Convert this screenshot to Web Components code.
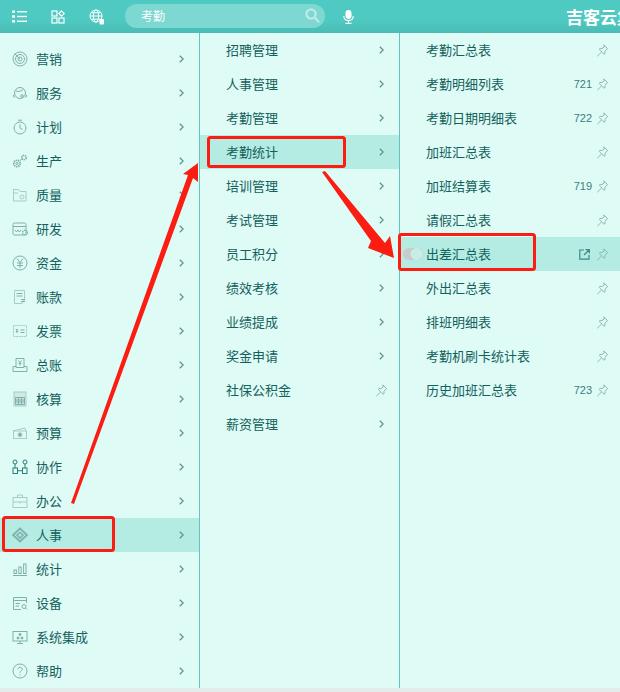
<!DOCTYPE HTML><html lang="zh-CN">
<head><meta charset="utf-8">
<title>吉客云 菜单</title>
<style>
  html, body { margin: 0; height: 100%; overflow: hidden; background: #dffbf6; }
  body { font-family: "Noto Sans CJK SC", "Liberation Sans", sans-serif; }
</style>

<template id="tpl-screen">
  <style>
    :host { display: flex; flex-direction: column; width: 620px; height: 692px; position: relative; overflow: hidden; background: #dffbf6; }
    .cols { display: flex; height: 655px; box-sizing: content-box; border-bottom: 4px solid #e4eceb; flex: none; }
  </style>
  <slot name="bar"></slot>
  <div class="cols"><slot></slot></div>
  <slot name="over"></slot>
</template>

<template id="tpl-bar">
  <style>
    :host { display: flex; align-items: center; flex: none; height: 33px; background: linear-gradient(#4ecac2 0, #4ecac2 60%, #4abcb5 100%); color: #fff; overflow: hidden; }
    svg { display: block; flex: none; }
    .ic1 { margin-left: 12px; }
    .ic2 { margin-left: 24px; }
    .ic3 { margin-left: 24px; }
    .search { display: flex; align-items: center; justify-content: space-between; box-sizing: border-box; flex: none; width: 200px; height: 24px; margin: 0 0 1px 20px; padding: 0 5px 2px 16px; border-radius: 12px; background: #7dd8d2; font-size: 12px; }
    .mic { margin-left: 18px; }
    .brand { margin-left: auto; font-size: 17px; font-weight: 700; white-space: nowrap; width: 54px; overflow: hidden; }
  </style>
  <svg class="ic1" width="15" height="13" viewBox="0 0 15 13" fill="#fff"><rect x="0" y="0.5" width="3" height="2.4"/><rect x="0" y="5.3" width="3" height="2.4"/><rect x="0" y="10.1" width="3" height="2.4"/><rect x="5" y="1" width="10" height="1.4"/><rect x="5" y="5.8" width="10" height="1.4"/><rect x="5" y="10.6" width="10" height="1.4"/></svg>
  <svg class="ic2" width="14" height="14" viewBox="0 0 14 14" fill="none" stroke="#fff" stroke-width="1.2"><rect x="1" y="1" width="5" height="5"/><rect x="1" y="8" width="5" height="5"/><rect x="8" y="8" width="5" height="5"/><path d="M10.5 .8 13.2 3.5 10.5 6.2 7.8 3.5Z"/></svg>
  <svg class="ic3" width="16" height="16" viewBox="0 0 16 16" fill="none" stroke="#fff" stroke-width="1"><circle cx="7" cy="7" r="6"/><ellipse cx="7" cy="7" rx="2.6" ry="6"/><path d="M1 7H13M2 3.8H12M2 10.2H12"/><rect x="10.5" y="10" width="4.5" height="5.5" rx="1" fill="#fff" stroke="none"/></svg>
  <div class="search"><span>考勤</span>
    <svg width="16" height="16" viewBox="0 0 16 16" fill="none" stroke="#bfeae6" stroke-width="2.2"><circle cx="7" cy="7" r="4.6"/><path d="M10.5 10.5 14.5 14.5" stroke-linecap="round"/></svg>
  </div>
  <svg class="mic" width="11" height="14" viewBox="0 0 11 14" fill="none" stroke="#fff" stroke-width="1.1"><rect x="2.5" y="0" width="6" height="9" rx="3" fill="#fff" stroke="none"/><path d="M.8 6C.8 12 10.2 12 10.2 6M5.5 10.5V13M2.5 13.4H8.5"/></svg>
  <div class="brand">吉客云集团</div>
</template>

<template id="tpl-col">
  <style>
    :host { display: block; box-sizing: border-box; flex: none; width: 200px; border-right: 1px solid #62c4bc; }
    :host([top]) { padding-top: 9px; }
    :host([last]) { flex: 1; width: auto; border-right: 0; }
  </style>
  <slot></slot>
</template>

<template id="tpl-row">
  <style>
    :host { display: flex; align-items: center; box-sizing: border-box; height: 34px; padding-left: 26px; padding-right: 15px; color: #13615c; font-size: 13px; }
    :host([active]) { background: #b4ece3; }
    :host([icon]) { padding-left: 12px; }
    .ic { display: none; width: 16px; height: 16px; margin-right: 8px; flex: none; }
    :host([icon]) .ic { display: block; }
    .t { flex: 1; white-space: nowrap; padding-bottom: 2px; }
    .tail { display: flex; align-items: center; gap: 4px; }
    ::slotted(svg) { display: block; }
  </style>
  <span class="ic"><slot name="icon"></slot></span>
  <span class="t"><slot></slot></span>
  <span class="tail"><slot name="tail"></slot></span>
</template>

</head><body>
<app-screen>
  <app-bar slot="bar"></app-bar>
  <svg slot="over" width="620" height="692" viewBox="0 0 620 692" style="position:absolute;left:0;top:0;pointer-events:none">
    <g fill="none" stroke="#fb1c12" stroke-width="3">
      <rect x="3.5" y="517.5" width="110" height="33" rx="2"/>
      <rect x="208.5" y="137.5" width="136" height="29" rx="2"/>
      <rect x="399.5" y="234.5" width="135" height="35" rx="2"/>
    </g>
    <g fill="#fb1c12">
      <path d="M71 503 74 504 193 178 198 182 198 163 183 174 188 175Z"/>
      <path d="M322 172 325 171 385 243 390 236 394 258 368 248 371 241Z"/>
    </g>
    <rect x="403" y="248" width="20" height="12" rx="6" fill="#c6cdcb"/>
    <circle cx="416.5" cy="254" r="5.5" fill="#c3efe7" stroke="#d8ebe7"/>
  </svg>
</app-screen>

<script>{
const chevron = '<svg slot="tail" width="5" height="8" viewBox="0 0 5 8" fill="none" stroke="#5f8f8b" stroke-width="1.2"><path d="M.8 .7 4.2 4 .8 7.3"/></svg>'
const pin = '<svg slot="tail" width="13" height="13" viewBox="0 0 12 13" fill="none" stroke="#8fb8b3" stroke-width="1" style="margin-right:-4px"><path d="M7.3 .8 11.2 4.7 10 5.3 8.4 7.6 8.6 9.6 7.5 10.2 2.8 5.5 3.4 4.4 5.4 4.6 7.7 3 Z"/><path d="M5 8 .8 12.2"/></svg>'
const open = '<svg slot="tail" width="11" height="11" viewBox="0 0 11 11" fill="none" stroke="#3f8580" stroke-width="1.2" style="margin-right:2px"><path d="M5 1H.8V10.2H10V6M6.5 .7H10.3V4.5M10 1 5 6"/></svg>'

const ico = (body, color) => `<svg slot="icon" width="16" height="16" viewBox="0 0 16 16" fill="none" stroke="${color || '#7fb0ab'}" stroke-width="1">${body}</svg>`
const icons = {
  营销: ico('<circle cx="8" cy="8" r="7"/><circle cx="8" cy="8" r="4.5"/><circle cx="8" cy="8" r="2"/><path d="M8 8 2.5 2.5"/>'),
  服务: ico('<circle cx="8" cy="8" r="5.5"/><path d="M2.5 9.5 1 11 2.8 12.5M13.5 9.5 15 11 13.2 12.5M4 6C7 7 10 6 11 4.5"/><circle cx="10" cy="11" r="1.3"/>'),
  计划: ico('<circle cx="8" cy="9" r="6"/><path d="M6 1.2H10M8 5.5V9L10.5 10.5"/>'),
  生产: ico('<circle cx="5" cy="10.5" r="3.2" stroke-dasharray="1.6 .6" stroke-width="1.6"/><circle cx="5" cy="10.5" r="1.1"/><circle cx="12" cy="4.5" r="2.2" stroke-dasharray="1.4 .6" stroke-width="1.6"/><path d="M8 7.5 10 6"/>'),
  质量: ico('<path d="M1.5 14V2.5H6.5L8 4.5H14V14Z"/><path d="M1.5 6H6"/><circle cx="10" cy="10" r="2"/>', '#a8cbc7'),
  研发: ico('<rect x="1" y="2" width="13" height="12" rx="1.5"/><path d="M1 5.5H14M3 9 4.5 11 6 9 7.5 11 9 9"/><circle cx="13" cy="11.5" r="2.4" stroke-dasharray="1.2 .6" stroke-width="1.4"/>'),
  资金: ico('<circle cx="8" cy="8" r="7"/><path d="M5 3.5 8 7.5 11 3.5M8 7.5V13M5 8H11M5 10.5H11"/>'),
  账款: ico('<path d="M2.5 1.5H12.5V10.5L10 14.5H2.5Z" stroke="#a8cbc7"/><path d="M4.5 4.5H10.5M4.5 7H10.5"/><path d="M9 10.5H13M9 12.5H13" stroke-width="1.2"/>'),
  发票: ico('<path d="M1.5 2.5H14.5V13.5H1.5Z" stroke="#a8cbc7" stroke-dasharray="2 .7"/><path d="M4 6 5 7.5 6 6M5 7.5V10M3.8 8.4H6.2M8.5 7H12.5M8.5 9.5H12.5"/>'),
  总账: ico('<path d="M4 1.5H12V10.5H4Z"/><path d="M1 9.5V14.5H15V9.5H12M4 9.5H1"/><path d="M6.5 3.5 8 5.5 9.5 3.5M8 5.5V8.5M6.5 6.3H9.5"/>'),
  核算: ico('<rect x="2" y="1" width="12" height="14" stroke="#a8cbc7" fill="#cfe9e5"/><path d="M3.5 6.5H12.5V13.5H3.5ZM3.5 9H12.5M3.5 11H12.5M6.5 6.5V13.5M9.5 6.5V13.5"/>'),
  预算: ico('<path d="M1 6 13 3 14 6"/><rect x="1.5" y="6" width="13" height="7.5"/><circle cx="8" cy="9.7" r="2" fill="#7fb0ab"/>', '#a8cbc7'),
  协作: ico('<rect x="1" y="1" width="4" height="4" rx="2"/><rect x="11" y="1" width="4" height="4" rx="2"/><rect x="1" y="9" width="4.5" height="5.5"/><rect x="10.5" y="9" width="4.5" height="5.5"/><path d="M3 5V9M13 5V9M5.5 11.7H10.5"/>', '#2c7c76'),
  办公: ico('<rect x="1" y="4.5" width="14" height="10"/><path d="M5.5 4.5V2H10.5V4.5M1 9H15M8 8V10.5"/>', '#a8cbc7'),
  人事: ico('<path d="M8 1.5 15 8 8 14.5 1 8Z" stroke-width="1.8"/><path d="M5 8 8 5.5 11 8 8 11Z" stroke-width="1.6"/>'),
  统计: ico('<path d="M1 14.5H15"/><rect x="2" y="9" width="2.4" height="3.5"/><rect x="6.8" y="6" width="2.4" height="6.5"/><rect x="11.6" y="3" width="2.4" height="9.5"/>'),
  设备: ico('<path d="M14.5 8V2.5H1.5V14.5H9"/><path d="M1.5 5.5H14.5M3.5 8.5H8M3.5 11H7"/><circle cx="12" cy="11.5" r="2"/><path d="M13.5 13 15 14.5"/>'),
  系统集成: ico('<rect x="1" y="2.5" width="14" height="9.5"/><path d="M5 14.5H11M8 12V14.5"/><circle cx="8" cy="5.5" r="1" fill="#7fb0ab"/><circle cx="6" cy="9" r="1" fill="#7fb0ab"/><circle cx="10" cy="9" r="1" fill="#7fb0ab"/>'),
  帮助: ico('<circle cx="8" cy="8" r="7"/><path d="M6 6.3C6 3.6 10.2 3.6 10.2 6.2 10.2 7.8 8 7.8 8 9.8"/><path d="M8 11.2V12.4"/>')
}

const build = (tpl) => class extends HTMLElement {
    constructor() {
        super()
        const c = document.querySelector(tpl).content
        this.attachShadow({ mode:'open' }).appendChild( c.cloneNode(true) )
    }
}
customElements.define('app-screen', build('#tpl-screen'))
customElements.define('app-bar', build('#tpl-bar'))
customElements.define('menu-col', build('#tpl-col'))
customElements.define('menu-row', build('#tpl-row'))

const screen = document.querySelector('app-screen')
const col = (attrs, rows) => {
    const c = document.createElement('menu-col')
    attrs.forEach(a => c.setAttribute(a, ''))
    rows.forEach(r => {
        const row = document.createElement('menu-row')
        if (r.active) row.setAttribute('active', '')
        if (r.icon) row.setAttribute('icon', '')
        row.innerHTML = (r.icon || '') + r.text + (r.tail || '')
        c.appendChild(row)
    })
    screen.appendChild(c)
}
const num = n => `<span slot="tail" style="font:11px 'Liberation Sans',sans-serif;color:#3e7d78">${n}</span>`

col(['top'], Object.keys(icons).map(k => ({ text: k, icon: icons[k], tail: chevron, active: k === '人事' })))
col([], ['招聘管理','人事管理','考勤管理','考勤统计','培训管理','考试管理','员工积分','绩效考核','业绩提成','奖金申请','社保公积金','薪资管理']
    .map(t => ({ text: t, tail: t === '社保公积金' ? pin : chevron, active: t === '考勤统计' })))
col(['last'], [
    ['考勤汇总表'], ['考勤明细列表', 721], ['考勤日期明细表', 722], ['加班汇总表'], ['加班结算表', 719], ['请假汇总表'],
    ['出差汇总表'], ['外出汇总表'], ['排班明细表'], ['考勤机刷卡统计表'], ['历史加班汇总表', 723]
].map(([t, n]) => ({
    text: t, active: t === '出差汇总表',
    tail: (n ? num(n) : '') + (t === '出差汇总表' ? open : '') + pin
})))
}</script>
</body></html>
